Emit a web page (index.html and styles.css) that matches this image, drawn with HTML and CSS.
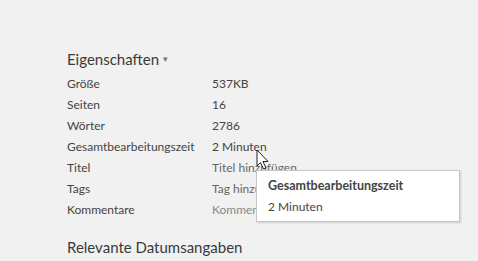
FILE: index.html
```html
<!DOCTYPE html>
<html lang="de">
<head>
  <meta charset="UTF-8">
  <title>Eigenschaften</title>
  <link rel="stylesheet" href="styles.css">
</head>
<body>

  <!-- Eigenschaften -->
  <div class="bereich">
    <h2 class="titel">Eigenschaften <span class="pfeil">&#9662;</span></h2>
    <div class="eigenschaften">
      <div class="zeile"><span class="name">Größe</span><span class="wert">537KB</span></div>
      <div class="zeile"><span class="name">Seiten</span><span class="wert">16</span></div>
      <div class="zeile"><span class="name">Wörter</span><span class="wert">2786</span></div>
      <div class="zeile"><span class="name">Gesamtbearbeitungszeit</span><span class="wert hover">2 Minuten</span></div>
      <div class="zeile"><span class="name">Titel</span><span class="wert leer">Titel hinzufügen</span></div>
      <div class="zeile"><span class="name">Tags</span><span class="wert leer">Tag hinzufügen</span></div>
      <div class="zeile"><span class="name">Kommentare</span><span class="wert blass">Kommentare hinzufügen</span></div>
    </div>
  </div>

  <div class="bereich">
    <h2 class="titel">Relevante Datumsangaben</h2>
  </div>

  <!-- Mauszeiger + Tooltip -->
  <svg class="zeiger" width="14" height="22" viewBox="0 0 14 22">
    <path d="M1 1 L1 17 L4.5 13.5 L7.5 20 L10 19 L7 12.5 L12 12.5 Z" fill="#fff" stroke="#222" stroke-width="1"/>
  </svg>
  <div class="tooltip">
    <strong>Gesamtbearbeitungszeit</strong>
    <span>2 Minuten</span>
  </div>

</body>
</html>
```

FILE: styles.css
```css
/* Backstage-Eigenschaften */
body {
  margin: 0;
  background: #f1f1f1;
  font-family: Lato, "Open Sans", sans-serif;
  color: #444;
  position: relative;
  height: 261px;
  overflow: hidden;
}

.bereich {
  padding-left: 67px;
}

.titel {
  margin: 0;
  font-weight: normal;
  font-size: 15px;
  color: #3a3a3a;
  padding-top: 48px;
  line-height: 22px;
}

.bereich + .bereich .titel {
  padding-top: 16px;
}

.pfeil {
  font-size: 9px;
  color: #777;
  vertical-align: 3px;
}

.eigenschaften {
  margin-top: 3px;
}

.zeile {
  display: grid;
  grid-template-columns: 145px 1fr;
  font-size: 12px;
  line-height: 21px;
}

.name {
  color: #444;
}

.wert {
  color: #444;
}

.wert.leer {
  color: #666;
}

.wert.blass {
  color: #888;
}

.zeiger {
  position: absolute;
  left: 256px;
  top: 149px;
}

.tooltip {
  position: absolute;
  left: 256px;
  top: 170px;
  width: 204px;
  height: 52px;
  box-sizing: border-box;
  background: #fff;
  border: 1px solid #c6c6c6;
  box-shadow: 1px 1px 2px rgba(0, 0, 0, 0.15);
  padding: 4px 11px;
  font-size: 12px;
  line-height: 21px;
  display: flex;
  flex-direction: column;
}

.tooltip strong {
  color: #444;
  font-weight: bold;
  font-size: 12.5px;
}
```
